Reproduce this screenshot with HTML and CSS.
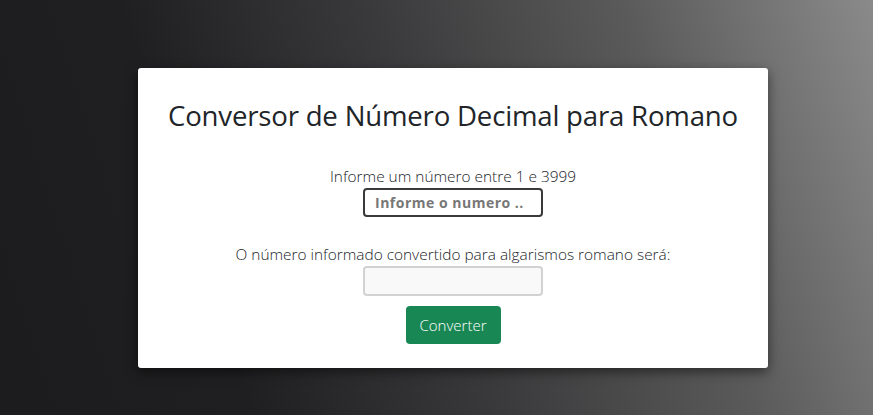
FILE: index.html
```html
<!DOCTYPE html>
<html lang="pt-BR">
<head>
<meta charset="utf-8">
<title>Conversor</title>
<link rel="stylesheet" href="styles.css">
</head>
<body>
<main class="page">
  <section class="card">
    <h1 class="title">Conversor de Número Decimal para Romano</h1>
    <div class="field">
      <label class="label" for="numero">Informe um número entre 1 e 3999</label>
      <input class="input input-number" id="numero" type="text" placeholder="Informe o numero ..">
    </div>
    <div class="field field-result">
      <label class="label" for="resultado">O número informado convertido para algarismos romano será:</label>
      <input class="input input-result" id="resultado" type="text" disabled>
    </div>
    <button class="btn" type="button">Converter</button>
  </section>
</main>
</body>
</html>
```
FILE: styles.css
```css
* { box-sizing: border-box; }
html, body { margin: 0; height: 100%; }
body {
  background: linear-gradient(72deg, #1c1c1e 0%, #1f1f21 25%, #3a3a3c 50%, #5a5a5a 75%, #8a8a8a 100%);
  font-family: "Open Sans", "Noto Sans", sans-serif;
  color: #212529;
}
.page {
  padding: 68px 0 0 138px;
}
.card {
  width: 630px;
  height: 300px;
  background: #fff;
  border-radius: 3px;
  box-shadow: 0 4px 12px rgba(0,0,0,0.5);
  display: flex;
  flex-direction: column;
  align-items: center;
  padding-top: 30px;
}
.title {
  margin: 0;
  font-size: 27.6px;
  font-weight: 400;
  line-height: 34px;
  letter-spacing: -0.2px;
}
.field {
  display: flex;
  flex-direction: column;
  align-items: center;
  margin-top: 35px;
}
.field-result { margin-top: 28px; }
.label {
  font-size: 15.4px;
  font-weight: 300;
  line-height: 20px;
}
.input {
  width: 180px;
  height: 29px;
  border-radius: 4px;
  font-family: inherit;
  margin-top: 1px;
  outline: none;
}
.input-number {
  border: 2px solid #3a3a3a;
  padding: 0 10px;
  font-size: 14px;
  font-weight: 700;
  letter-spacing: 0.5px;
}
.input-number::placeholder { color: #777; }
.input-result {
  border: 2px solid #d2d2d2;
  background: #f9f9f9;
  height: 30px;
}
.btn {
  margin-top: 10px;
  width: 95px;
  height: 38px;
  background: #198754;
  color: #fff;
  border: none;
  border-radius: 4px;
  font-family: inherit;
  font-size: 15px;
  font-weight: 300;
}
```
